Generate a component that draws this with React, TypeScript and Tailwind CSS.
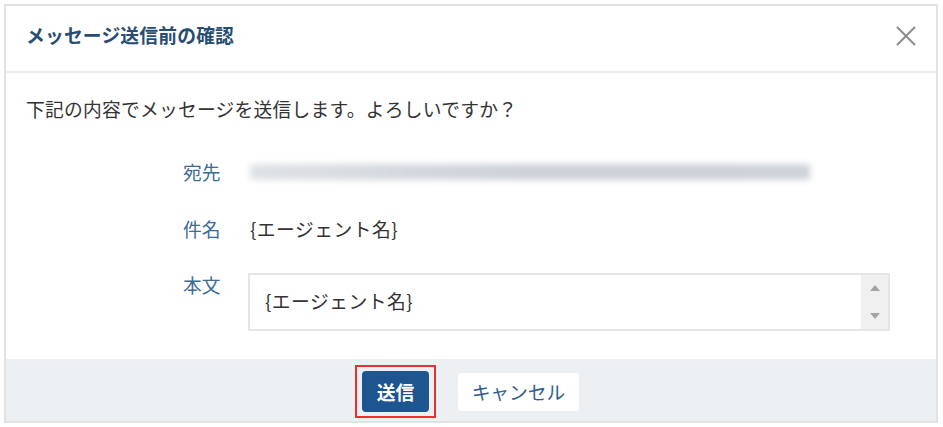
const FONT = "font-['Noto_Sans_CJK_JP','Noto_Sans',sans-serif]";

function CloseIcon() {
  return (
    <svg width="22" height="20" viewBox="0 0 22 20" fill="none">
      <path d="M2 1 L20 19 M20 1 L2 19" stroke="#8c8c8c" strokeWidth="2" />
    </svg>
  );
}

function Row({ label, children }: { label: string; children: React.ReactNode }) {
  return (
    <div className="flex items-start">
      <div className="ml-[157px] w-[65px] shrink-0 leading-[24px] text-[#3d6b97]">{label}</div>
      {children}
    </div>
  );
}

export default function App() {
  return (
    <div className={`${FONT} h-[427px] w-[943px] bg-white pl-[4px] pt-[4px] text-[18.75px] text-[#333]`}>
      <div className="flex w-[934px] flex-col border-2 border-[#e2e2e2]">
        {/* Header */}
        <div className="flex h-[67px] items-start justify-between border-b-2 border-[#ececec] pl-[20px] pr-[19px] pt-[17px]">
          <h2 className="text-[18.75px] font-bold leading-[24px] tracking-[0.2px] text-[#284d73]">メッセージ送信前の確認</h2>
          <button className="mt-[3px]">
            <CloseIcon />
          </button>
        </div>

        {/* Body */}
        <div className="flex h-[286px] flex-col pl-[20px] pt-[24px]">
          <p className="leading-[24px] tracking-[0.25px]">下記の内容でメッセージを送信します。よろしいですか？</p>

          <div className="mt-[39px]">
            <Row label="宛先">
              <div className="flex h-[24px] items-center pl-[2px]">
                <div className="h-[16px] w-[560px] rounded-[3px] bg-gradient-to-r from-[#dfe2e6] via-[#ccd1d8] to-[#ced3d9] blur-[3px]" />
              </div>
            </Row>
          </div>

          <div className="mt-[33px]">
            <Row label="件名">
              <div className="pl-[2px] leading-[24px] tracking-[0.5px]">{"{エージェント名}"}</div>
            </Row>
          </div>

          <div className="mt-[32px]">
            <Row label="本文">
              <div className="flex h-[58px] w-[642px] border-2 border-[#e6e6e6] bg-white">
                <div className="flex-1 pl-[15px] pt-[14px] leading-[24px] tracking-[0.5px]">{"{エージェント名}"}</div>
                <div className="flex w-[27px] flex-col items-center justify-between bg-[#f0f0f0] py-[10px]">
                  <svg width="10" height="6" viewBox="0 0 10 6">
                    <path d="M0 6 L5 0 L10 6 Z" fill="#a3a3a3" />
                  </svg>
                  <svg width="10" height="6" viewBox="0 0 10 6">
                    <path d="M0 0 L10 0 L5 6 Z" fill="#a3a3a3" />
                  </svg>
                </div>
              </div>
            </Row>
          </div>
        </div>

        {/* Footer */}
        <div className="flex h-[62px] items-center justify-center gap-[22px] bg-[#ecf0f3] pr-[8px] pt-[3px]">
          <div className="border-2 border-[#ee2f2f] px-[5px] py-[4px]">
            <button className="h-[41px] w-[67px] rounded-[4px] bg-[#1d5591] font-bold leading-[24px] text-white">
              送信
            </button>
          </div>
          <button className="h-[38px] w-[121px] rounded-[3px] bg-white leading-[24px] text-[#2e5d8f]">
            キャンセル
          </button>
        </div>
      </div>
    </div>
  );
}
